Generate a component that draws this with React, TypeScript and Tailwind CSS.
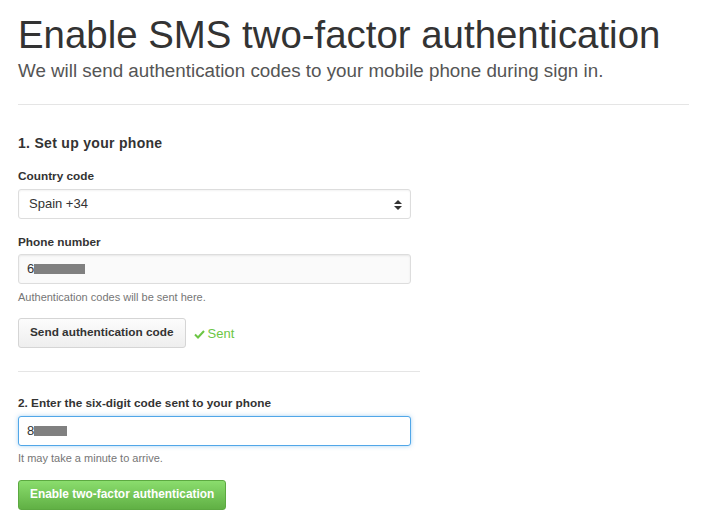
import React from "react";

export default function App() {
  return (
    <div className="min-h-[532px] bg-white font-['Liberation_Sans',Arial,sans-serif] text-[#333]">
      <div className="w-[671px] pl-[18px] pt-[13px] box-content">
        {/* Header */}
        <h1 className="text-[38.4px] leading-[44px] font-normal text-[#333]">
          Enable SMS two-factor authentication
        </h1>
        <p className="text-[18.8px] leading-[24px] text-[#555] mt-[2px]">
          We will send authentication codes to your mobile phone during sign in.
        </p>
        <div className="h-px bg-[#e5e5e5] mt-[21px] w-[671px]" />

        {/* Step 1 */}
        <div className="w-[402px] mt-[29px]">
          <h3 className="text-[14px] leading-[18px] font-bold tracking-[0.3px]">1. Set up your phone</h3>

          <label className="block text-[11.8px] leading-[16px] font-bold mt-[16px]">Country code</label>
          <div className="relative w-[393px] h-[30px] mt-[5px] border border-[#ddd] rounded-[3px] bg-white shadow-[inset_0_1px_2px_rgba(0,0,0,0.05)] flex items-center pl-[10px] text-[13px]">
            Spain +34
            <svg className="absolute right-[8px] top-[10px]" width="8" height="10" viewBox="0 0 8 10">
              <path d="M4 0 L8 4 H0 Z" fill="#333" />
              <path d="M0 6 H8 L4 10 Z" fill="#333" />
            </svg>
          </div>

          <label className="block text-[11.8px] leading-[16px] font-bold mt-[15px]">Phone number</label>
          <div className="w-[393px] h-[30px] mt-[4px] border border-[#ddd] rounded-[3px] bg-[#fafafa] shadow-[inset_0_1px_2px_rgba(0,0,0,0.075)] flex items-center pl-[8px] text-[13px]">
            <span>6</span>
            <span className="inline-block w-[51px] h-[10px] bg-[#808080]" />
          </div>
          <p className="text-[11px] leading-[14px] text-[#767676] mt-[6px]">Authentication codes will be sent here.</p>

          <div className="flex items-center mt-[14px]">
            <button className="h-[30px] px-[11px] border border-[#d5d5d5] rounded-[3px] bg-gradient-to-b from-[#fcfcfc] to-[#eeeeee] text-[11.8px] font-bold text-[#333]">
              Send authentication code
            </button>
            <span className="ml-[8px] flex items-center text-[13px] text-[#6cc644] mt-[2px]">
              <svg width="11" height="9" viewBox="0 0 11 9" className="mr-[3px]">
                <path d="M1 4.5 L4 7.5 L10 1" stroke="#6cc644" strokeWidth="2" fill="none" />
              </svg>
              Sent
            </span>
          </div>

          <div className="h-px bg-[#e5e5e5] mt-[23px]" />

          {/* Step 2 */}
          <label className="block text-[11.8px] leading-[16px] font-bold mt-[23px]">
            2. Enter the six-digit code sent to your phone
          </label>
          <div className="w-[393px] h-[30px] mt-[5px] border border-[#51a7e8] rounded-[3px] bg-white shadow-[0_0_4px_rgba(81,167,232,0.5)] flex items-center pl-[8px] text-[13px]">
            <span>8</span>
            <span className="inline-block w-[33px] h-[10px] bg-[#808080]" />
          </div>
          <p className="text-[11px] leading-[14px] text-[#767676] mt-[5px]">It may take a minute to arrive.</p>

          <button className="mt-[15px] h-[30px] px-[11px] border border-[#5ca941] rounded-[3px] bg-gradient-to-b from-[#8add6d] to-[#60b044] text-[11.9px] font-bold text-white">
            Enable two-factor authentication
          </button>
        </div>
      </div>
    </div>
  );
}
